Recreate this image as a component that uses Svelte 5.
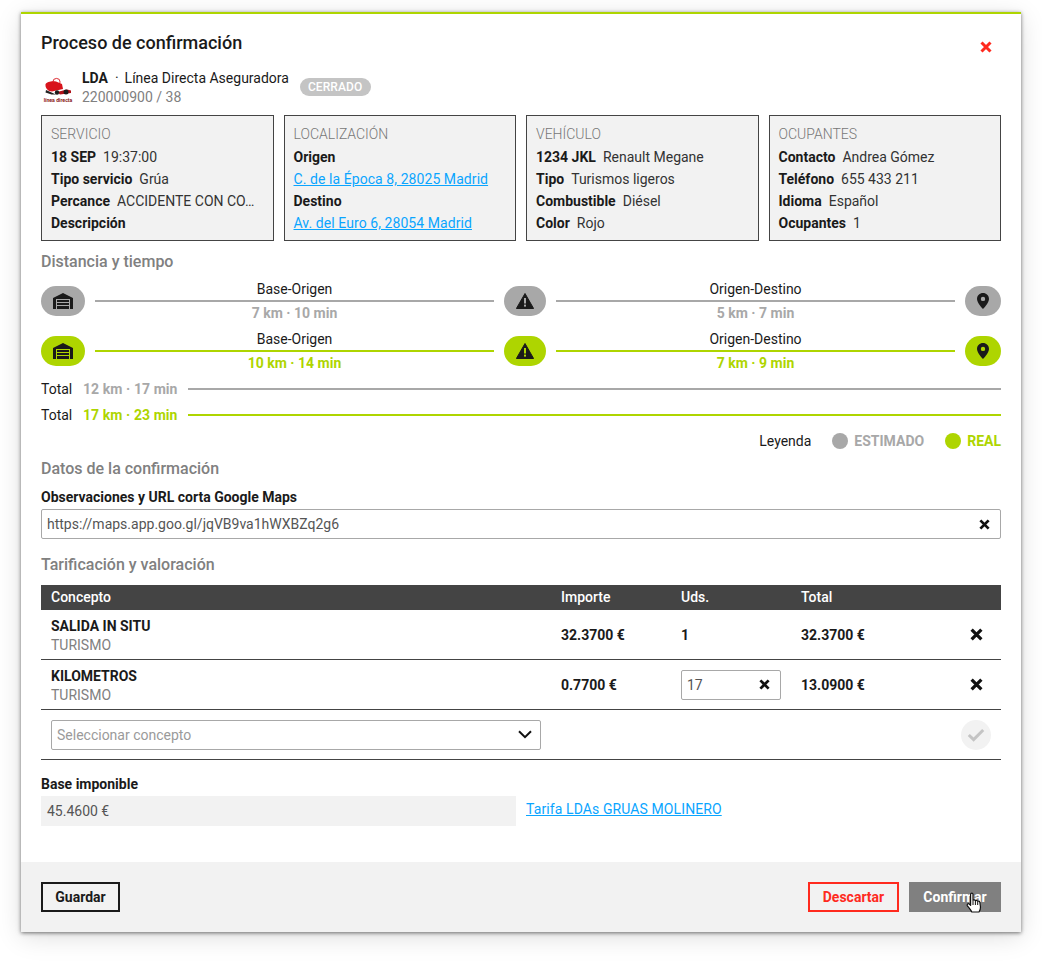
<script>
  const cards = [
    { t: 'SERVICIO', rows: [['18 SEP', '19:37:00'], ['Tipo servicio', 'Grúa'], ['Percance', 'ACCIDENTE CON CO…'], ['Descripción', '']] },
    { t: 'LOCALIZACIÓN', rows: [['Origen', ''], ['', 'C. de la Época 8, 28025 Madrid', true], ['Destino', ''], ['', 'Av. del Euro 6, 28054 Madrid', true]] },
    { t: 'VEHÍCULO', rows: [['1234 JKL', 'Renault Megane'], ['Tipo', 'Turismos ligeros'], ['Combustible', 'Diésel'], ['Color', 'Rojo']] },
    { t: 'OCUPANTES', rows: [['Contacto', 'Andrea Gómez'], ['Teléfono', '655 433 211'], ['Idioma', 'Español'], ['Ocupantes', '1']] }
  ];
  const routes = [
    { c: 'est', a: '7 km · 10 min', b: '5 km · 7 min' },
    { c: 'real', a: '10 km · 14 min', b: '7 km · 9 min' }
  ];
</script>

{#snippet x(size)}
  <svg class="x" width={size} height={size} viewBox="0 0 12 12" aria-hidden="true"><path d="M1.5 1.5 10.5 10.5M10.5 1.5 1.5 10.5" stroke="currentColor" stroke-width="3" fill="none"/></svg>
{/snippet}

<div class="page">
<div class="modal">
  <div class="content">
    <header class="head">
      <h1>Proceso de confirmación</h1>
      <span class="close">{@render x(12)}</span>
    </header>

    <div class="client">
      <svg class="logo" width="30" height="26" viewBox="0 0 30 26" aria-hidden="true">
        <path d="M2.5 7.5 C3.5 4.5 9 4 13 4.5 L19 7 L20 12 L9 14.5 C5 14.5 2 11 2.5 7.5Z" fill="#d8141c"/>
        <circle cx="13.5" cy="5" r="3.6" fill="none" stroke="#d8141c" stroke-width="0.9"/>
        <path d="M3 13 L13 17.5 L8.5 17.5 L2.5 15.5Z" fill="#222"/>
        <path d="M14 15 L24 12.5 L28 13.5 L28 16 L17 17.5Z" fill="#b01018"/>
        <circle cx="23" cy="15" r="2.5" fill="#1b1b1b"/>
        <circle cx="14" cy="15.5" r="2.2" fill="#1b1b1b"/>
        <text class="logo-text" x="15" y="24.6" text-anchor="middle">línea directa</text>
      </svg>
      <div class="client-text">
        <div class="client-name"><b>LDA</b><span class="dot">·</span><span>Línea Directa Aseguradora</span></div>
        <div class="client-num">220000900 / 38</div>
      </div>
      <span class="badge">CERRADO</span>
    </div>

    <div class="cards">
      {#each cards as c}
        <section class="card">
          <div class="card-title">{c.t}</div>
          {#each c.rows as r}
            <div class="card-row">
              {#if r[0]}<b>{r[0]}</b>{/if}
              {#if r[2]}<a href="#top">{r[1]}</a>{:else if r[1]}<span>{r[1]}</span>{/if}
            </div>
          {/each}
        </section>
      {/each}
    </div>

    <h2 class="h-dist">Distancia y tiempo</h2>

    <div class="routes">
      {#each routes as r}
        <div class="route {r.c}">
          <span class="pill p-base">
            <svg width="22" height="16" viewBox="0 0 22 16" aria-hidden="true"><path d="M1 5 11 0 21 5V16H18V6H4V16H1Z" fill="#1a1a1a"/><path d="M5 7H17V9H5ZM5 10H17V12H5ZM5 13H17V15.9H5Z" fill="#1a1a1a"/></svg>
          </span>
          <div class="seg">
            <div class="seg-top">Base-Origen</div>
            <div class="seg-line"></div>
            <div class="seg-val">{r.a}</div>
          </div>
          <span class="pill p-warn">
            <svg width="18" height="16" viewBox="0 0 18 16" aria-hidden="true"><path d="M9 .5 17.6 15.5H.4Z" fill="#1a1a1a" stroke="#1a1a1a" stroke-linejoin="round"/><rect class="mark" x="8" y="5" width="2" height="5.5"/><rect class="mark" x="8" y="11.6" width="2" height="2"/></svg>
          </span>
          <div class="seg">
            <div class="seg-top">Origen-Destino</div>
            <div class="seg-line"></div>
            <div class="seg-val">{r.b}</div>
          </div>
          <span class="pill p-pin">
            <svg width="12" height="16" viewBox="0 0 12 16" aria-hidden="true"><path fill-rule="evenodd" d="M6 0C2.7 0 0 2.6 0 5.9 0 10 6 16 6 16S12 10 12 5.9C12 2.6 9.3 0 6 0ZM6 3.7A2.2 2.2 0 1 1 6 8.1 2.2 2.2 0 0 1 6 3.7Z" fill="#1a1a1a"/></svg>
          </span>
        </div>
      {/each}
    </div>

    <div class="totals">
      <div class="total est"><span class="t-label">Total</span><b>12 km · 17 min</b><i></i></div>
      <div class="total real"><span class="t-label">Total</span><b>17 km · 23 min</b><i></i></div>
    </div>

    <div class="legend">
      <span class="leg-label">Leyenda</span>
      <span class="leg est"><i></i>ESTIMADO</span>
      <span class="leg real"><i></i>REAL</span>
    </div>

    <h2 class="h-datos">Datos de la confirmación</h2>
    <div class="field-label">Observaciones y URL corta Google Maps</div>
    <div class="input url"><span>https://maps.app.goo.gl/jqVB9va1hWXBZq2g6</span>{@render x(11)}</div>

    <h2 class="h-tar">Tarificación y valoración</h2>
    <div class="table">
      <div class="tr th"><span>Concepto</span><span>Importe</span><span>Uds.</span><span>Total</span><span></span></div>
      <div class="tr">
        <div><b>SALIDA IN SITU</b><small>TURISMO</small></div>
        <b>32.3700 €</b><b>1</b><b>32.3700 €</b>
        <span class="del">{@render x(13)}</span>
      </div>
      <div class="tr">
        <div><b>KILOMETROS</b><small>TURISMO</small></div>
        <b>0.7700 €</b>
        <div class="input qty"><span>17</span>{@render x(11)}</div>
        <b>13.0900 €</b>
        <span class="del">{@render x(13)}</span>
      </div>
      <div class="tr add">
        <div class="input select">
          <span>Seleccionar concepto</span>
          <svg width="14" height="9" viewBox="0 0 14 9" aria-hidden="true"><path d="M1 1.2 7 7.2 13 1.2" fill="none" stroke="#111" stroke-width="2"/></svg>
        </div>
        <span class="ok">
          <svg width="18" height="14" viewBox="0 0 18 14" aria-hidden="true"><path d="M1.8 7 6.6 11.6 16.2 2" fill="none" stroke="#c4c4c4" stroke-width="3"/></svg>
        </span>
      </div>
    </div>

    <div class="field-label base-label">Base imponible</div>
    <div class="base-row">
      <div class="base-val">45.4600 €</div>
      <a href="#top" class="tarifa">Tarifa LDAs GRUAS MOLINERO</a>
    </div>
  </div>

  <footer class="foot">
    <button class="btn save">Guardar</button>
    <div class="foot-right">
      <button class="btn discard">Descartar</button>
      <button class="btn confirm">Confirmar</button>
    </div>
    <svg class="cursor" width="18" height="22" viewBox="0 0 18 22" aria-hidden="true">
      <path d="M5 1.5C5.9.8 7 1.3 7 2.5V8.2C7.6 7.7 8.9 7.8 9.3 8.6 10 8.1 11.2 8.4 11.5 9.2 12.3 8.8 13.5 9.2 13.8 10.2L14.5 15C14.6 17 14 18.5 13 20H5.8C5.2 18.4 2.6 15.4 1.4 13.8 .6 12.6 1.9 11.2 3.2 12L4.6 13.4V2.5C4.6 2.1 4.7 1.8 5 1.5Z" fill="#fff" stroke="#111" stroke-width="1.2" stroke-linejoin="round"/>
      <path d="M7 8.5V13M9.4 8.8V13M11.7 9.5V13" stroke="#111" stroke-width="1" fill="none"/>
    </svg>
  </footer>
</div>
</div>

<style>
  :global(body) { margin: 0; background: #fff; }
  .page { height: 962px; box-sizing: border-box; padding: 12px 0 0 21px; overflow: hidden; }
  .modal {
    box-sizing: border-box;
    width: 1000px;
    height: 920px;
    background: #fff;
    border-top: 2px solid #aed500;
    box-shadow: 0 1px 4px rgba(0,0,0,.55), 0 5px 24px rgba(0,0,0,.13);
    display: flex;
    flex-direction: column;
    font: 400 14px/22px Roboto, sans-serif;
    color: #1a1a1a;
  }
  .content { flex: 1; padding: 0 20px; min-height: 0; }
  b { font-weight: 700; }
  .head { display: flex; justify-content: space-between; height: 56px; }
  h1 { margin: 18px 0 0; font: 500 18px/22px Roboto, sans-serif; color: #1a1a1a; }
  .close { color: #ff2a1e; margin: 27px 9px 0 0; height: 12px; display: flex; }
  .x { display: block; flex: none; color: #111; }
  .close .x { color: #ff2a1e; }

  .client { display: flex; align-items: center; height: 36px; margin-bottom: 9px; }
  .logo { margin: 3px 9px 0 2px; flex: none; }
  .logo-text { font: 700 5.2px Roboto, sans-serif; fill: #8a1a20; }
  .client-name { line-height: 18px; color: #1a1a1a; margin-top: -1px; }
  .dot { margin: 0 6px 0 7px; }
  .client-num { line-height: 20px; color: #808080; }
  .badge {
    margin: -2px 0 0 11px;
    background: #c4c4c4;
    color: #fff;
    font: 500 12px/18px Roboto, sans-serif;
    border-radius: 9px;
    padding: 0 9px 0 8px;
    letter-spacing: .1px;
  }

  .cards { display: grid; grid-template-columns: repeat(4, 1fr); gap: 10px; }
  .card {
    box-sizing: border-box;
    height: 126px;
    min-width: 0;
    background: #f2f2f2;
    border: 1px solid #444;
    padding: 7px 9px;
  }
  .card-title { color: #777; font-weight: 300; line-height: 22px; margin-bottom: 1px; }
  .card-row { display: flex; gap: 7px; height: 22px; white-space: nowrap; }
  .card-row b { flex: none; }
  .card-row span { color: #333; }
  .card-row a { letter-spacing: .07px; }
  a { color: #0aa5ff; text-decoration: underline; }

  h2 { margin: 0; font: 500 16px/20px Roboto, sans-serif; color: #808080; }
  .h-dist { margin-top: 11px; }

  .routes { display: flex; flex-direction: column; gap: 20px; margin-top: 14px; }
  .route { display: flex; gap: 10px; height: 30px; }
  .route.est { --c: #a8a8a8; }
  .route.real { --c: #aed500; }
  .pill {
    flex: none;
    height: 30px;
    border-radius: 15px;
    background: var(--c);
    display: flex;
    align-items: center;
    justify-content: center;
  }
  .p-base { width: 44px; }
  .p-warn { width: 42px; }
  .p-pin { width: 36px; }
  .mark { fill: var(--c); }
  .seg { flex: 1; position: relative; height: 30px; }
  .seg-top { position: absolute; inset: -7px 0 auto; text-align: center; line-height: 20px; }
  .seg-line { position: absolute; left: 0; right: 0; top: 14px; height: 2px; background: var(--c); }
  .seg-val { position: absolute; inset: 17px 0 auto; text-align: center; line-height: 20px; font-weight: 700; color: var(--c); }

  .totals { margin-top: 13px; display: flex; flex-direction: column; gap: 6px; }
  .total { display: flex; align-items: center; height: 20px; }
  .total.est { --c: #a8a8a8; }
  .total.real { --c: #aed500; }
  .t-label { width: 42px; flex: none; }
  .total b { color: var(--c); white-space: nowrap; letter-spacing: .07px; }
  .total i { flex: 1; height: 2px; background: var(--c); margin-left: 10px; }

  .legend { display: flex; justify-content: flex-end; align-items: center; height: 20px; margin-top: 6px; }
  .leg-label { margin-right: 21px; }
  .leg { display: flex; align-items: center; font-weight: 700; }
  .leg i { width: 16px; height: 16px; border-radius: 50%; margin-right: 6px; background: currentColor; }
  .leg.est { color: #a8a8a8; margin-right: 21px; }
  .leg.real { color: #aed500; }

  .h-datos { margin-top: 8px; }
  .field-label { font-weight: 700; line-height: 20px; }
  .h-datos + .field-label { margin-top: 8px; }

  .input {
    box-sizing: border-box;
    height: 30px;
    border: 1px solid #a8a8a8;
    border-radius: 2px;
    display: flex;
    align-items: center;
    justify-content: space-between;
    padding: 0 10px 0 5px;
    color: #555;
    background: #fff;
  }
  .url { margin-top: 2px; }
  .h-tar { margin-top: 16px; }

  .table { margin-top: 10px; }
  .tr {
    display: grid;
    grid-template-columns: 510px 120px 120px 1fr 40px;
    align-items: center;
    height: 50px;
    padding-left: 10px;
    border-bottom: 1px solid #444;
    box-sizing: border-box;
  }
  .tr > div > b { display: block; line-height: 20px; }
  .tr small { display: block; font-size: 14px; line-height: 18px; color: #808080; }
  .th { height: 25px; padding-bottom: 1px; background: #444; color: #fff; font-weight: 500; border: 0; }
  .del { justify-self: start; margin-left: 9px; }
  .qty { width: 100px; }
  .add { grid-template-columns: 490px 1fr; }
  .select { color: #9a9a9a; padding-right: 8px; }
  .ok {
    justify-self: end;
    margin-right: 10px;
    width: 30px;
    height: 30px;
    border-radius: 50%;
    background: #f2f2f2;
    display: flex;
    align-items: center;
    justify-content: center;
  }
  .base-label { margin-top: 14px; }
  .base-row { display: flex; align-items: flex-start; gap: 10px; margin-top: 2px; }
  .base-val {
    box-sizing: border-box;
    width: 475px;
    height: 30px;
    background: #f2f2f2;
    color: #555;
    padding: 4px 6px;
  }
  .tarifa { margin-top: 2px; letter-spacing: .1px; }

  .foot {
    position: relative;
    flex: none;
    height: 70px;
    box-sizing: border-box;
    padding: 20px;
    background: #f2f2f2;
    display: flex;
    justify-content: space-between;
  }
  .foot-right { display: flex; gap: 10px; }
  .btn {
    box-sizing: border-box;
    height: 30px;
    font: 700 14px/1 Roboto, sans-serif;
    background: transparent;
    border: 2px solid;
    padding: 0;
  }
  .save { width: 79px; color: #1a1a1a; border-color: #1a1a1a; }
  .discard { width: 91px; color: #ff2a1e; border-color: #ff2a1e; }
  .confirm { width: 92px; color: #fff; background: #808080; border-color: #808080; }
  .cursor { position: absolute; left: 945px; top: 30px; }
</style>
